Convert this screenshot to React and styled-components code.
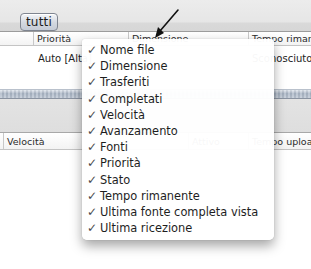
import React from "react";
import styled, { createGlobalStyle } from "styled-components";

const Global = createGlobalStyle`
  html, body { margin: 0; padding: 0; background: #ffffff; }
  body { font-family: "DejaVu Sans", "Liberation Sans", sans-serif; }
`;

const Window = styled.div`
  position: relative;
  width: 311px;
  height: 269px;
  overflow: hidden;
  background: #ffffff;
  display: flex;
  flex-direction: column;
`;

const Toolbar = styled.div`
  height: 32px;
  flex: none;
  box-sizing: border-box;
  padding: 13px 0 0 20px;
  background: linear-gradient(#ececec 0, #e6e6e6 22px, #d9d9d9 23px, #d6d6d6 32px);
  border-bottom: 1px solid #9c9c9c;
`;

const FilterButton = styled.div`
  width: 38px;
  height: 18px;
  box-sizing: border-box;
  border: 1px solid #7f8590;
  border-radius: 4px;
  background: linear-gradient(#f4f6f9, #d3d8e0 55%, #c6ccd6);
  box-shadow: inset 0 1px 0 #ffffff;
  font-size: 12px;
  color: #1c1c1c;
  display: flex;
  align-items: center;
  justify-content: center;
  letter-spacing: 0.2px;
`;

const Header = styled.div`
  height: ${(p) => p.$h}px;
  flex: none;
  display: flex;
  background: linear-gradient(#ffffff, #f3f3f3);
  border-bottom: 1px solid #c4c4c4;
  font-size: 9.5px;
  color: #2a2a2a;
`;

const HeadCell = styled.div`
  width: ${(p) => p.$w}px;
  flex: none;
  box-sizing: border-box;
  border-left: ${(p) => (p.$first ? "none" : "1px solid #c8c8c8")};
  padding-left: 3px;
  display: flex;
  align-items: center;
  white-space: nowrap;
  overflow: hidden;
`;

const Row = styled.div`
  height: 20px;
  flex: none;
  display: flex;
  font-size: 10px;
  color: #222;
  line-height: 25px;
`;

const Cell = styled.div`
  width: ${(p) => p.$w}px;
  flex: none;
  box-sizing: border-box;
  padding-left: 4px;
  white-space: nowrap;
  overflow: hidden;
`;

const Blank = styled.div`
  height: ${(p) => p.$h}px;
  flex: ${(p) => (p.$h ? "none" : "1")};
  background: #ffffff;
`;

const Splitter = styled.div`
  height: 8px;
  flex: none;
  border-top: 1px solid #b9c1cc;
  border-bottom: 1px solid #8a93a1;
  background: repeating-linear-gradient(
      90deg,
      rgba(255, 255, 255, 0.2) 0 2px,
      rgba(0, 0, 0, 0.05) 2px 4px
    ),
    linear-gradient(#dfe5ec, #a9b5c5 45%, #bcc6d3);
`;

const Pane = styled.div`
  height: 33px;
  flex: none;
  background: linear-gradient(#e3e3e3, #dedede);
  border-bottom: 1px solid #a8a8a8;
`;

const Menu = styled.div`
  position: absolute;
  left: 82px;
  top: 39px;
  width: 192px;
  box-sizing: border-box;
  padding: 3px 0 4px;
  background: rgba(255, 255, 255, 0.965);
  border-radius: 3px 3px 5px 5px;
  box-shadow: 0 6px 12px rgba(0, 0, 0, 0.35), 0 0 1px rgba(0, 0, 0, 0.3);
`;

const Item = styled.div`
  height: 16.2px;
  display: flex;
  align-items: center;
  font-size: 11.4px;
  color: #1e1e1e;
  white-space: nowrap;
`;

const Check = styled.span`
  width: 13px;
  padding-left: 5px;
  flex: none;
  font-size: 12px;
  color: #4a4a4a;
`;

const Arrow = styled.svg`
  position: absolute;
  left: 150px;
  top: 6px;
  width: 34px;
  height: 36px;
`;

const items = [
  "Nome file",
  "Dimensione",
  "Trasferiti",
  "Completati",
  "Velocità",
  "Avanzamento",
  "Fonti",
  "Priorità",
  "Stato",
  "Tempo rimanente",
  "Ultima fonte completa vista",
  "Ultima ricezione",
];

export default function App() {
  return (
    <>
      <Global />
      <Window>
        <Toolbar>
          <FilterButton>tutti</FilterButton>
        </Toolbar>
        <Header $h={13}>
          <HeadCell $w={33} $first />
          <HeadCell $w={95}>Priorità</HeadCell>
          <HeadCell $w={120}>Dimensione</HeadCell>
          <HeadCell $w={63}>Tempo rimanente</HeadCell>
        </Header>
        <Row>
          <Cell $w={34} />
          <Cell $w={95}>Auto [Alta]</Cell>
          <Cell $w={119} />
          <Cell $w={63}>Sconosciuto</Cell>
        </Row>
        <Blank $h={23} />
        <Splitter />
        <Pane />
        <Header $h={16}>
          <HeadCell $w={3} $first />
          <HeadCell $w={185}>Velocità</HeadCell>
          <HeadCell $w={60}>Attivo</HeadCell>
          <HeadCell $w={63}>Tempo upload</HeadCell>
        </Header>
        <Blank />
        <Menu>
          {items.map((t) => (
            <Item key={t}>
              <Check>✓</Check>
              {t}
            </Item>
          ))}
        </Menu>
        <Arrow viewBox="0 0 34 36">
          <line x1="28" y1="4" x2="10" y2="25" stroke="#111" strokeWidth="1.6" strokeLinecap="round" />
          <polygon points="5,32 8,21 14,27" fill="#111" />
        </Arrow>
      </Window>
    </>
  );
}
